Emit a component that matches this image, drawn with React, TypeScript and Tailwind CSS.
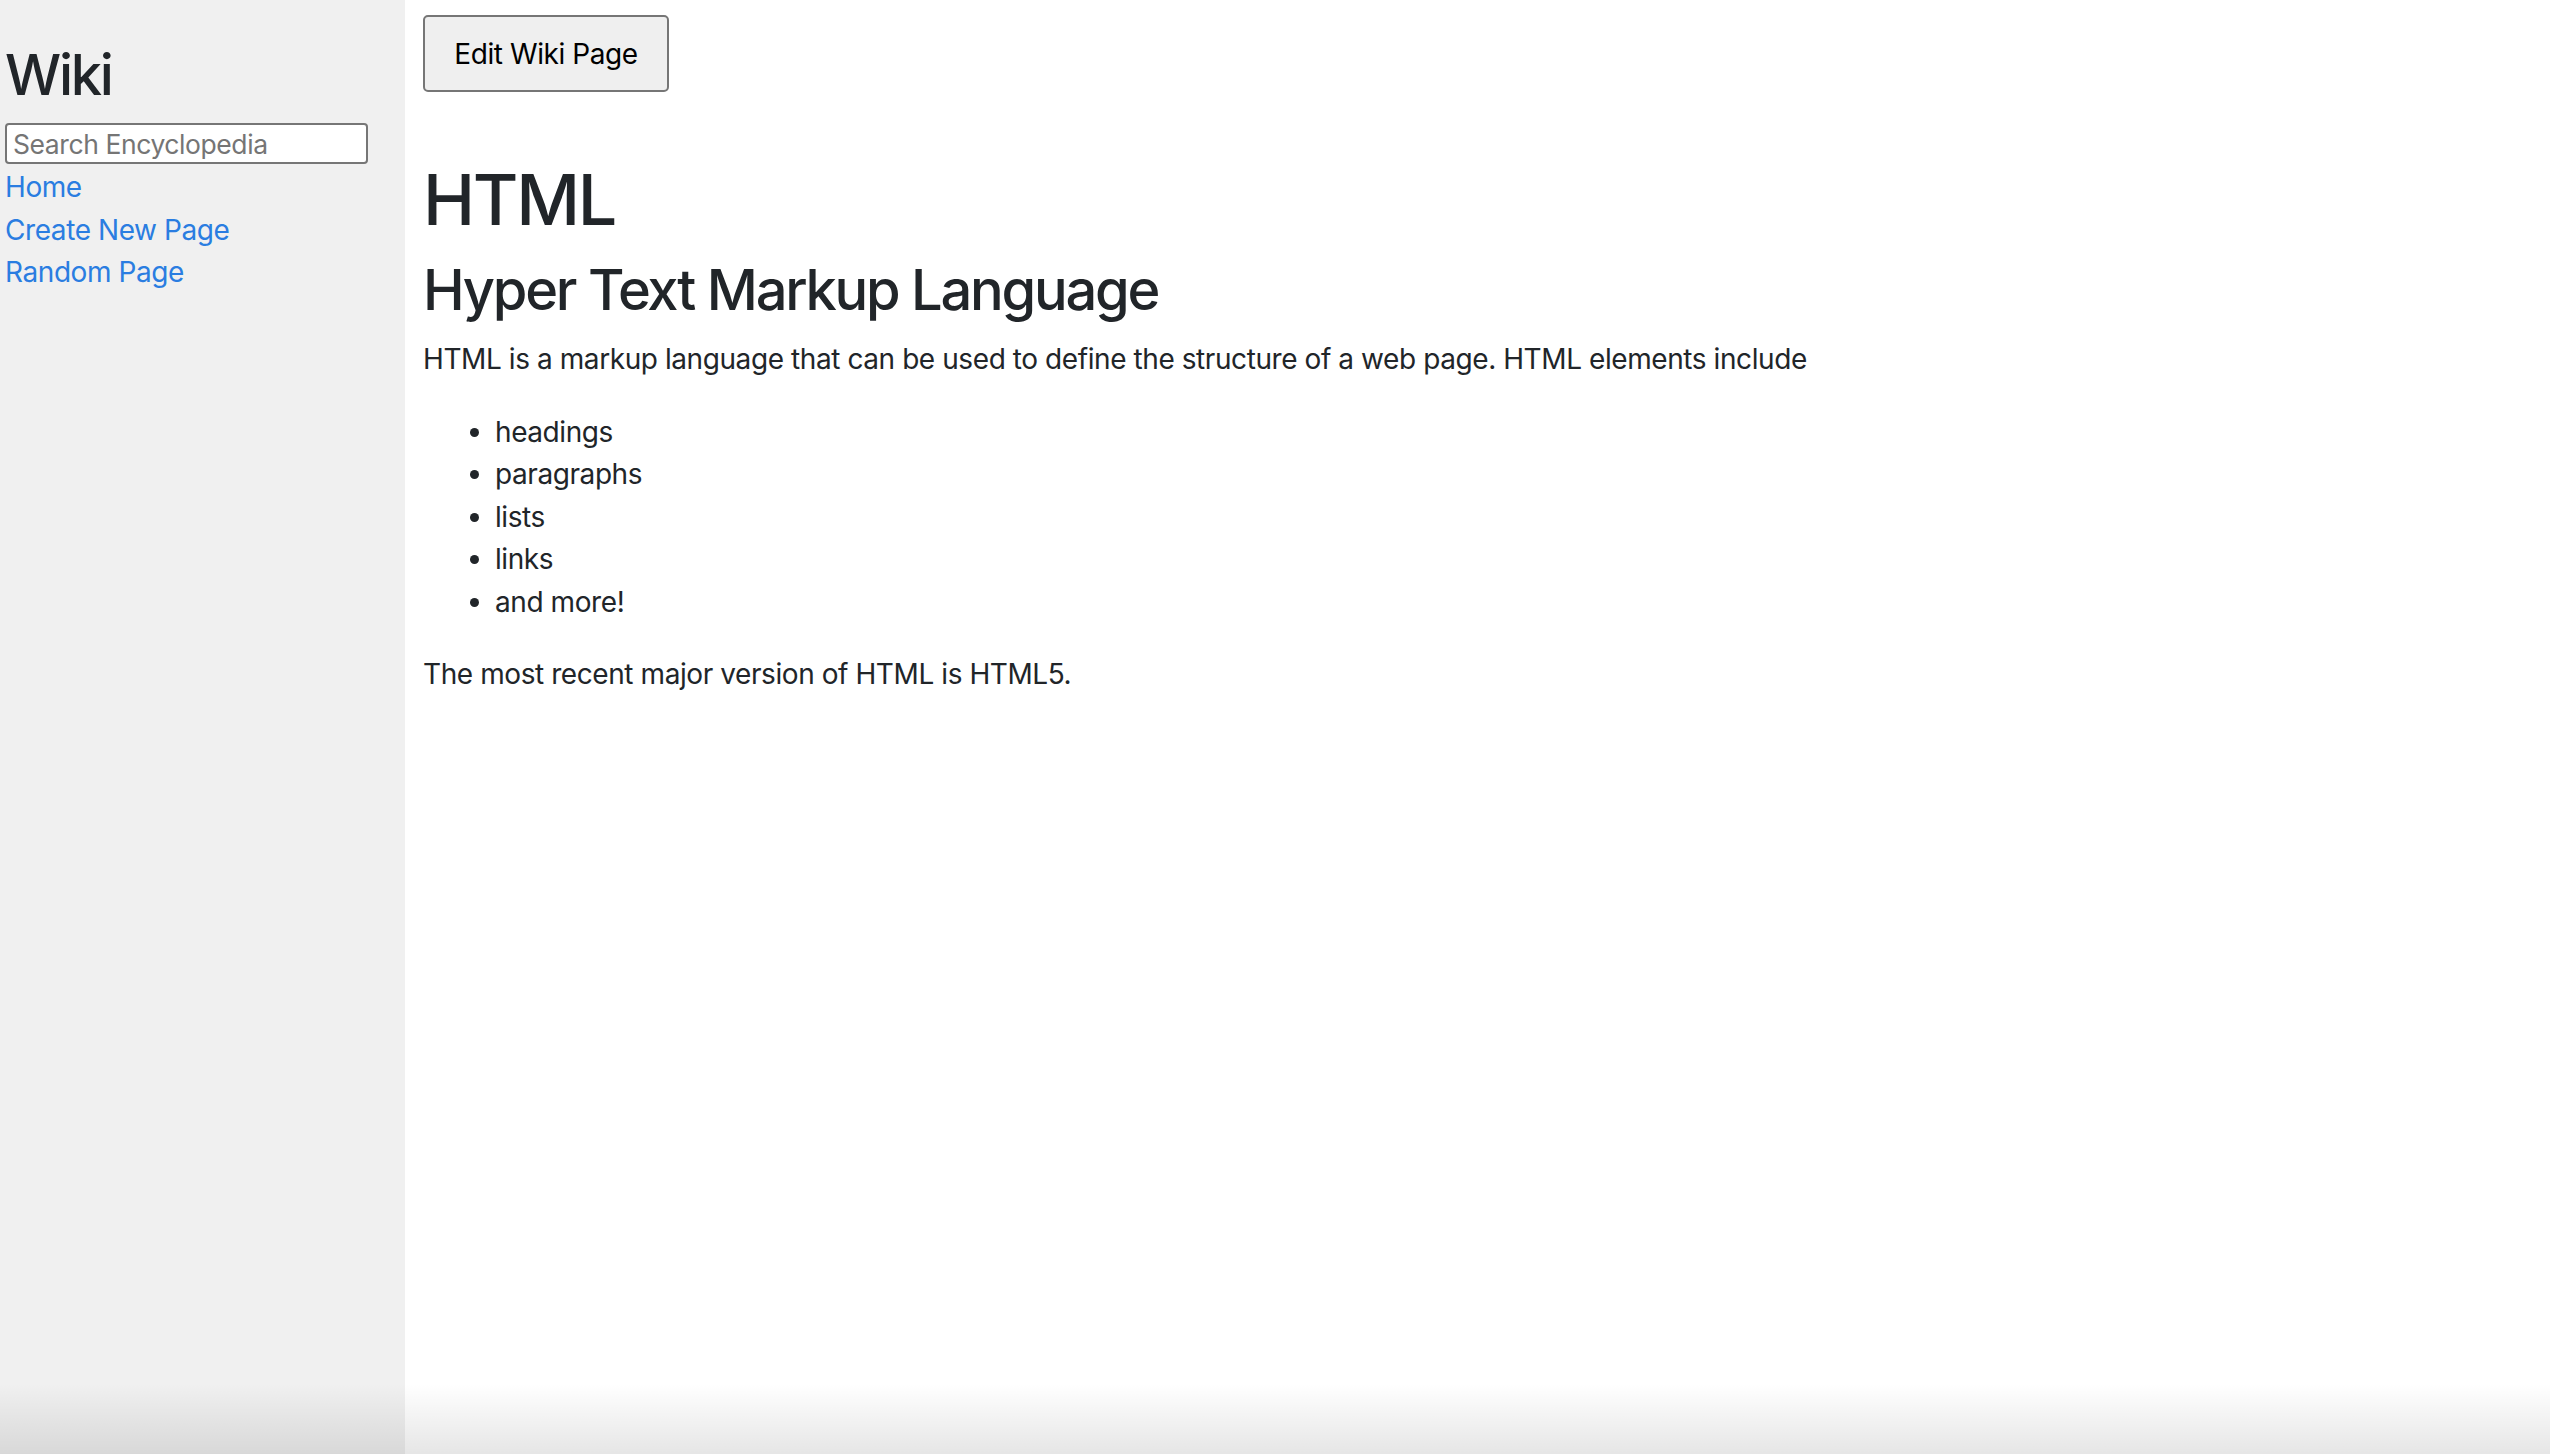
export default function App() {
  return (
    <div className="relative flex min-h-screen bg-white font-['Inter','Helvetica',sans-serif] text-[28px] leading-[42.5px] tracking-[-0.015em] text-[#212529]">
      {/* sidebar */}
      <aside className="w-[405px] shrink-0 bg-[#f0f0f0] pl-[5px] pt-[41px]">
        <h2 className="mb-[13px] text-[56px] leading-[69px] font-medium tracking-[-0.04em]">Wiki</h2>
        <input
          type="text"
          placeholder="Search Encyclopedia"
          className="block h-[41px] w-[363px] rounded-[4px] border-2 border-[#767676] bg-white px-[6px] text-[26.5px] leading-none text-[#212529] placeholder:text-[#757575]"
        />
        <nav className="mt-[2px] flex flex-col text-[#2a7de1]">
          <a href="#">Home</a>
          <a href="#">Create New Page</a>
          <a href="#">Random Page</a>
        </nav>
      </aside>

      {/* main */}
      <main className="flex-1 pl-[18px] pt-[15px]">
        <button className="flex h-[77px] w-[246px] items-center justify-center rounded-[5px] border-2 border-[#767676] bg-[#efefef] pt-[2px] text-black">
          Edit Wiki Page
        </button>

        <h1 className="mt-[65px] text-[70px] leading-[86.4px] font-medium tracking-[-0.033em]">HTML</h1>
        <h2 className="mt-[13px] text-[56px] leading-[69px] font-medium tracking-[-0.04em]">
          Hyper Text Markup Language
        </h2>
        <p className="mt-[13px]">
          HTML is a markup language that can be used to define the structure of a web page. HTML elements include
        </p>
        <ul className="mt-[30px] list-disc pl-[72px]">
          <li>headings</li>
          <li>paragraphs</li>
          <li>lists</li>
          <li>links</li>
          <li>and more!</li>
        </ul>
        <p className="mt-[30px]">The most recent major version of HTML is HTML5.</p>
      </main>

      {/* window shadow at the bottom edge */}
      <div className="pointer-events-none absolute inset-x-0 bottom-0 h-[70px] bg-linear-to-b from-transparent to-black/10" />
    </div>
  );
}
